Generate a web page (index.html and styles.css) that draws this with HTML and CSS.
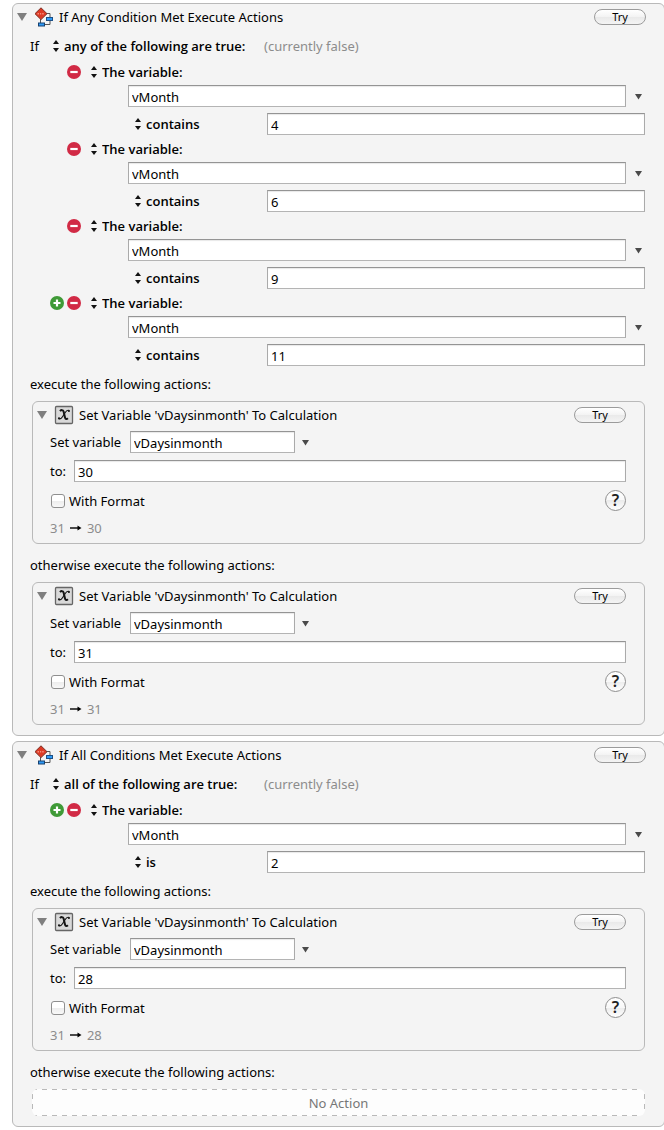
FILE: index.html
```
<!DOCTYPE html>
<html lang="en">
<head>
<meta charset="utf-8">
<title>Macro Actions</title>
<link rel="stylesheet" href="styles.css">
</head>
<body>
<svg class="sprites" aria-hidden="true">
  <symbol id="disclosure" viewBox="0 0 10 8"><path d="M0 0h10L5 8z" fill="#7f7f7f"/></symbol>
  <symbol id="caret" viewBox="0 0 7 6"><path d="M0 0h7L3.500 5.500z" fill="#4a4a4a"/></symbol>
  <symbol id="updown" viewBox="0 0 6 12"><path d="M3 0l3 4H0zM3 12L0 8h6z" fill="#111"/></symbol>
  <symbol id="plus" viewBox="0 0 14 14"><circle cx="7" cy="7" r="7" fill="#3f9a37"/><path d="M7 3.500v7M3.500 7h7" stroke="#fff" stroke-width="2.200"/></symbol>
  <symbol id="minus" viewBox="0 0 14 14"><circle cx="7" cy="7" r="7" fill="#d12a45"/><path d="M3.300 7h7.400" stroke="#fff" stroke-width="2.200"/></symbol>
  <symbol id="flow" viewBox="0 0 20 20">
    <path d="M12 6.500h4v11H9M6.500 12v4" fill="none" stroke="#555" stroke-width="1"/>
    <path d="M7 .8l6 5.900-6 5.900-6-5.900z" fill="#dd3a25" stroke="#7d3025" stroke-width="1"/>
    <path d="M3.500 6.800h1.500M6 6.800h1.200M8.200 6.800h1.500" stroke="#f58d7b" stroke-width="1.400"/>
    <rect x="12.500" y="10.500" width="6" height="3" fill="#2f9af5" stroke="#1b4f86"/>
    <rect x="4.500" y="16" width="6" height="3" fill="#2f9af5" stroke="#16406e"/>
  </symbol>
  <symbol id="variable" viewBox="0 0 20 20">
    <rect x="1.500" y="1.500" width="17" height="17" rx="1" fill="#d9d9d9" stroke="#666" stroke-width="1.300"/>
    <path d="M6 6.200C7.200 4.800 9 4.600 9.600 6.600L11 12.600c.4 1.700 1.600 1.900 2.900.6" fill="none" stroke="#151515" stroke-width="2"/>
    <path d="M15.300 5.600c-1.600-.9-2.700.1-3.700 1.400L8.300 12c-1 1.500-2.200 2.500-3.700 1.600" fill="none" stroke="#151515" stroke-width="1.100"/>
    <circle cx="14.900" cy="6" r="1.100" fill="#151515"/><circle cx="5" cy="13.300" r="1.100" fill="#151515"/>
  </symbol>
</svg>
<main class="actions">
  <section class="card">
    <header class="card-head">
      <button class="toggle" aria-label="Collapse"><svg><use href="#disclosure"/></svg></button>
      <svg class="kind"><use href="#flow"/></svg>
      <h2>If Any Condition Met Execute Actions</h2>
      <button class="try">Try</button>
    </header>
    <div class="match">
      <label for="m1">If</label>
      <svg class="updown"><use href="#updown"/></svg>
      <select id="m1"><option>any of the following are true:</option></select>
      <span class="muted">(currently false)</span>
    </div>
    <div class="conditions">
      <div class="condition">
        <div class="source"><span class="round"></span><button class="round" aria-label="Remove"><svg><use href="#minus"/></svg></button><svg class="updown"><use href="#updown"/></svg><select aria-label="Condition type"><option>The variable:</option></select></div>
        <div class="combo"><input type="text" aria-label="Variable name" value="vMonth"><button class="caret" aria-label="Choose variable"><svg><use href="#caret"/></svg></button></div>
        <div class="test"><svg class="updown"><use href="#updown"/></svg><select aria-label="Test"><option>contains</option></select><input type="text" aria-label="Value" value="4"></div>
      </div>
      <div class="condition">
        <div class="source"><span class="round"></span><button class="round" aria-label="Remove"><svg><use href="#minus"/></svg></button><svg class="updown"><use href="#updown"/></svg><select aria-label="Condition type"><option>The variable:</option></select></div>
        <div class="combo"><input type="text" aria-label="Variable name" value="vMonth"><button class="caret" aria-label="Choose variable"><svg><use href="#caret"/></svg></button></div>
        <div class="test"><svg class="updown"><use href="#updown"/></svg><select aria-label="Test"><option>contains</option></select><input type="text" aria-label="Value" value="6"></div>
      </div>
      <div class="condition">
        <div class="source"><span class="round"></span><button class="round" aria-label="Remove"><svg><use href="#minus"/></svg></button><svg class="updown"><use href="#updown"/></svg><select aria-label="Condition type"><option>The variable:</option></select></div>
        <div class="combo"><input type="text" aria-label="Variable name" value="vMonth"><button class="caret" aria-label="Choose variable"><svg><use href="#caret"/></svg></button></div>
        <div class="test"><svg class="updown"><use href="#updown"/></svg><select aria-label="Test"><option>contains</option></select><input type="text" aria-label="Value" value="9"></div>
      </div>
      <div class="condition">
        <div class="source"><button class="round" aria-label="Add"><svg><use href="#plus"/></svg></button><button class="round" aria-label="Remove"><svg><use href="#minus"/></svg></button><svg class="updown"><use href="#updown"/></svg><select aria-label="Condition type"><option>The variable:</option></select></div>
        <div class="combo"><input type="text" aria-label="Variable name" value="vMonth"><button class="caret" aria-label="Choose variable"><svg><use href="#caret"/></svg></button></div>
        <div class="test"><svg class="updown"><use href="#updown"/></svg><select aria-label="Test"><option>contains</option></select><input type="text" aria-label="Value" value="11"></div>
      </div>
    </div>
    <p class="branch">execute the following actions:</p>
    <section class="card nested">
      <header class="card-head">
        <button class="toggle" aria-label="Collapse"><svg><use href="#disclosure"/></svg></button>
        <svg class="kind"><use href="#variable"/></svg>
        <h3>Set Variable 'vDaysinmonth' To Calculation</h3>
        <button class="try">Try</button>
      </header>
      <div class="set-row"><label for="v1">Set variable</label><input type="text" id="v1" value="vDaysinmonth"><button class="caret" aria-label="Choose variable"><svg><use href="#caret"/></svg></button></div>
      <div class="to-row"><label for="t1">to:</label><input type="text" id="t1" value="30"></div>
      <div class="format-row"><input type="checkbox" id="f1"><label for="f1">With Format</label><button class="help">?</button></div>
      <p class="result"><span>31</span><svg viewBox="0 0 12 8"><path d="M0 4h9" stroke="#000" stroke-width="1.400"/><path d="M7.500 1.500l4 2.500-4 2.500z"/></svg><span>30</span></p>
    </section>
    <p class="branch later">otherwise execute the following actions:</p>
    <section class="card nested">
      <header class="card-head">
        <button class="toggle" aria-label="Collapse"><svg><use href="#disclosure"/></svg></button>
        <svg class="kind"><use href="#variable"/></svg>
        <h3>Set Variable 'vDaysinmonth' To Calculation</h3>
        <button class="try">Try</button>
      </header>
      <div class="set-row"><label for="v2">Set variable</label><input type="text" id="v2" value="vDaysinmonth"><button class="caret" aria-label="Choose variable"><svg><use href="#caret"/></svg></button></div>
      <div class="to-row"><label for="t2">to:</label><input type="text" id="t2" value="31"></div>
      <div class="format-row"><input type="checkbox" id="f2"><label for="f2">With Format</label><button class="help">?</button></div>
      <p class="result"><span>31</span><svg viewBox="0 0 12 8"><path d="M0 4h9" stroke="#000" stroke-width="1.400"/><path d="M7.500 1.500l4 2.500-4 2.500z"/></svg><span>31</span></p>
    </section>
  </section>

  <section class="card">
    <header class="card-head">
      <button class="toggle" aria-label="Collapse"><svg><use href="#disclosure"/></svg></button>
      <svg class="kind"><use href="#flow"/></svg>
      <h2>If All Conditions Met Execute Actions</h2>
      <button class="try">Try</button>
    </header>
    <div class="match">
      <label for="m2">If</label>
      <svg class="updown"><use href="#updown"/></svg>
      <select id="m2"><option>all of the following are true:</option></select>
      <span class="muted">(currently false)</span>
    </div>
    <div class="conditions">
      <div class="condition">
        <div class="source"><button class="round" aria-label="Add"><svg><use href="#plus"/></svg></button><button class="round" aria-label="Remove"><svg><use href="#minus"/></svg></button><svg class="updown"><use href="#updown"/></svg><select aria-label="Condition type"><option>The variable:</option></select></div>
        <div class="combo"><input type="text" aria-label="Variable name" value="vMonth"><button class="caret" aria-label="Choose variable"><svg><use href="#caret"/></svg></button></div>
        <div class="test"><svg class="updown"><use href="#updown"/></svg><select aria-label="Test"><option>is</option></select><input type="text" aria-label="Value" value="2"></div>
      </div>
    </div>
    <p class="branch">execute the following actions:</p>
    <section class="card nested">
      <header class="card-head">
        <button class="toggle" aria-label="Collapse"><svg><use href="#disclosure"/></svg></button>
        <svg class="kind"><use href="#variable"/></svg>
        <h3>Set Variable 'vDaysinmonth' To Calculation</h3>
        <button class="try">Try</button>
      </header>
      <div class="set-row"><label for="v3">Set variable</label><input type="text" id="v3" value="vDaysinmonth"><button class="caret" aria-label="Choose variable"><svg><use href="#caret"/></svg></button></div>
      <div class="to-row"><label for="t3">to:</label><input type="text" id="t3" value="28"></div>
      <div class="format-row"><input type="checkbox" id="f3"><label for="f3">With Format</label><button class="help">?</button></div>
      <p class="result"><span>31</span><svg viewBox="0 0 12 8"><path d="M0 4h9" stroke="#000" stroke-width="1.400"/><path d="M7.500 1.500l4 2.500-4 2.500z"/></svg><span>28</span></p>
    </section>
    <p class="branch later">otherwise execute the following actions:</p>
    <div class="empty">No Action</div>
  </section>
</main>
</body>
</html>
```
FILE: styles.css
```
* { box-sizing: border-box; }

body {
  margin: 0;
  background: #fff;
  color: #000;
  font: 13px/20px "Noto Sans", "Open Sans", sans-serif;
  overflow-x: hidden;
}

h2, h3, p { margin: 0; font-size: inherit; font-weight: normal; }
svg { display: block; flex: none; }
.sprites { display: none; }

button, input, select { margin: 0; font: inherit; color: inherit; }

button { flex: none; padding: 0; border: 0; background: none; }

select {
  appearance: none;
  padding: 0;
  border: 0;
  background: none;
  font-family: "Open Sans", "Noto Sans", sans-serif;
  font-weight: 600;
}

input[type="text"] {
  flex: 1;
  min-width: 0;
  height: 22px;
  padding: 1px 3px 0;
  border: 1px solid #aaa;
  border-top-color: #949494;
  border-bottom-color: #b4b4b4;
  background: #fff;
  box-shadow: inset 0 1px 1px #e8e8e8;
}

.actions {
  display: flex;
  flex-direction: column;
  gap: 5px;
  margin-right: -1px;
  padding: 3px 0 3px 12px;
}

.card {
  padding: 0 19px 10px;
  border: 1px solid #b9b9b9;
  border-radius: 6px;
  background: #f4f4f4;
}

.card-head {
  display: flex;
  align-items: center;
  height: 26px;
  margin: 0 -1px 3px -15px;
}

.card-head h2, .card-head h3 { flex: 1; }
.toggle svg { width: 10px; height: 8px; }
.kind { width: 20px; height: 20px; margin: 0 5px 0 7px; }

.try {
  width: 52px;
  height: 16px;
  border: 1px solid #9b9b9b;
  border-radius: 8px;
  background: linear-gradient(#fff, #f3f3f3 50%, #e9e9e9 50%, #f4f4f4);
  font-size: 11px;
  line-height: 14px;
}

.updown { width: 6px; height: 12px; }

.match {
  display: flex;
  align-items: center;
  height: 26px;
  margin-left: -2px;
}

.match label { width: 23px; }
.match select { width: 194px; margin-left: 5px; }
.match .muted { margin-left: 6px; }
.muted { flex: 1; color: #8c8c8c; }

.conditions { display: flex; flex-direction: column; gap: 1px; padding-bottom: 1px; }

.source {
  display: flex;
  align-items: center;
  gap: 3px;
  height: 26px;
  padding-left: 18px;
}

.round, .round svg { display: block; width: 14px; height: 14px; }
.source .updown { margin: 0 2px 0 7px; }

.combo { display: flex; align-items: center; margin-left: 96px; }
.caret { width: 19px; padding-left: 7px; }
.combo .caret { padding-left: 9px; }
.caret svg { width: 7px; height: 6px; margin-top: 2px; }

.test {
  display: flex;
  align-items: center;
  margin: 6px 0 0 103px;
}

.test select { width: 121px; margin-left: 5px; }

.branch { margin-left: -2px; line-height: 34px; }
.later { margin-top: 4px; }

.nested { padding: 0 18px 5px 17px; }
.nested .card-head { margin: 0 0 3px -13px; }

.set-row, .to-row, .format-row, .result { display: flex; align-items: center; }
.set-row label { width: 80px; }
.set-row input[type="text"] { flex: 0 1 165px; }
.to-row { margin-top: 7px; }
.to-row label { width: 24px; }

.format-row { height: 21px; margin-top: 8px; }
.format-row label { flex: 1; }

.format-row input {
  appearance: none;
  width: 14px;
  height: 14px;
  margin: 0 4px 0 1px;
  border: 1px solid #8f8f8f;
  border-radius: 3px;
  background: linear-gradient(#fff, #fff 50%, #ededed 50%, #f8f8f8);
}

.help {
  width: 21px;
  height: 21px;
  border: 1px solid #8f8f8f;
  border-radius: 50%;
  background: linear-gradient(#fff, #f8f8f8 50%, #ebebeb 50%, #fff);
  color: #222;
  font-size: 16px;
  font-weight: 600;
  line-height: 19px;
}

.result { height: 20px; margin-top: 7px; color: #8c8c8c; gap: 5px; }
.result svg { width: 12px; height: 8px; }

.empty {
  height: 27px;
  border-radius: 6px;
  background:
    repeating-linear-gradient(90deg, #b9b9b9 0 5px, transparent 5px 10px) top / 100% 1px no-repeat,
    repeating-linear-gradient(90deg, #b9b9b9 0 5px, transparent 5px 10px) bottom / 100% 1px no-repeat,
    repeating-linear-gradient(transparent 0 5px, #b9b9b9 5px 10px) left / 1px 100% no-repeat,
    repeating-linear-gradient(transparent 0 5px, #b9b9b9 5px 10px) right / 1px 100% no-repeat,
    #fdfdfd;
  color: #777;
  line-height: 28px;
  text-align: center;
}
```
